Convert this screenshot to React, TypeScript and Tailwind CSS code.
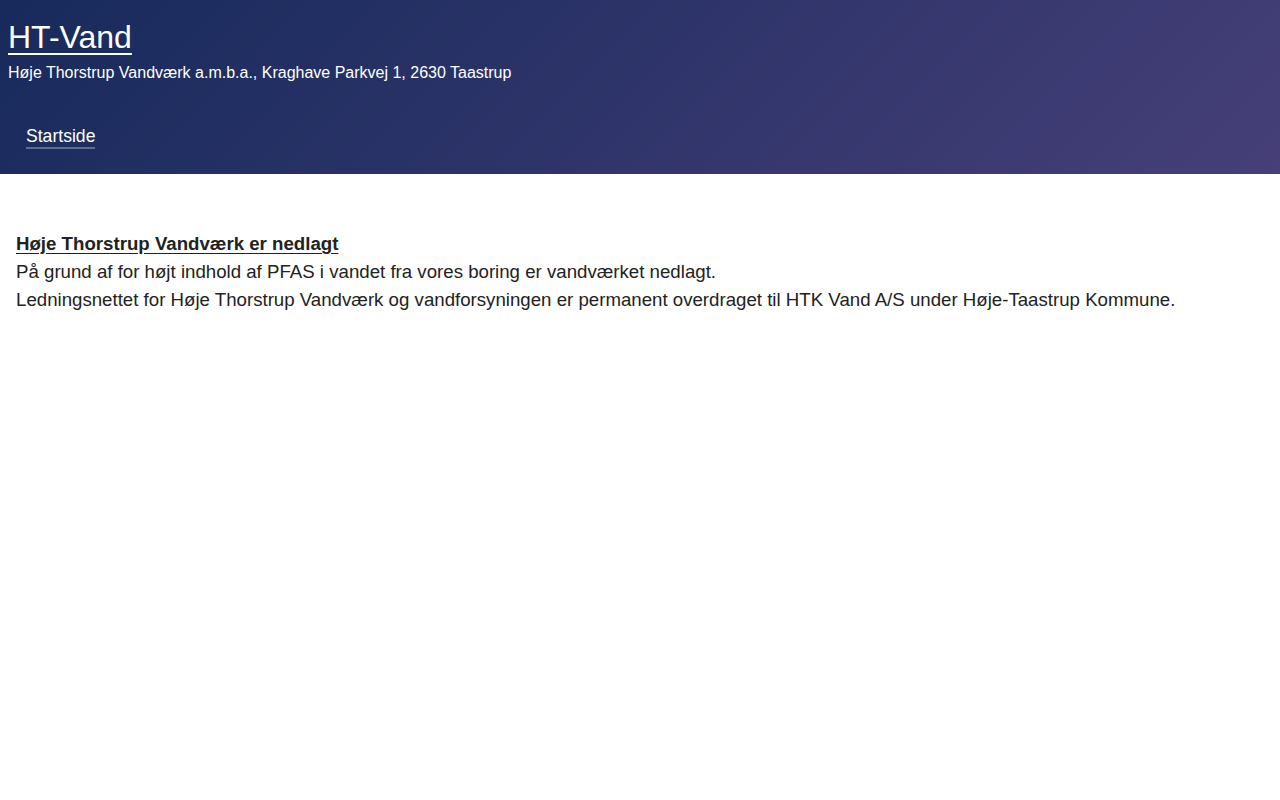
export default function App() {
  return (
    <div className="min-h-screen bg-white font-['Liberation_Sans',Arial,sans-serif]">
      {/* Header */}
      <header className="h-[174px] bg-[linear-gradient(135deg,#172a5b,#463f78)] text-white">
        <div className="px-2 pt-[17px]">
          <a href="#" className="text-[32px] leading-[40px] underline underline-offset-[5px] decoration-[2px]">
            HT-Vand
          </a>
          <p className="text-[16px] leading-[24px] mt-[4px]">
            Høje Thorstrup Vandværk a.m.b.a., Kraghave Parkvej 1, 2630 Taastrup
          </p>
        </div>
        <nav className="flex px-[26px] mt-[40px]">
          <a href="#" className="text-[17.6px] leading-[22px] pb-0 border-b-2 border-white/30">
            Startside
          </a>
        </nav>
      </header>

      {/* Content */}
      <main className="px-4 pt-[56px] text-[18.67px] leading-[28px] text-[#222222]">
        <p>
          <strong className="underline underline-offset-[3px]">Høje Thorstrup Vandværk er nedlagt</strong>
        </p>
        <p>På grund af for højt indhold af PFAS i vandet fra vores boring er vandværket nedlagt.</p>
        <p>
          Ledningsnettet for Høje Thorstrup Vandværk og vandforsyningen er permanent overdraget til HTK Vand A/S
          under Høje-Taastrup Kommune.
        </p>
      </main>
    </div>
  );
}
